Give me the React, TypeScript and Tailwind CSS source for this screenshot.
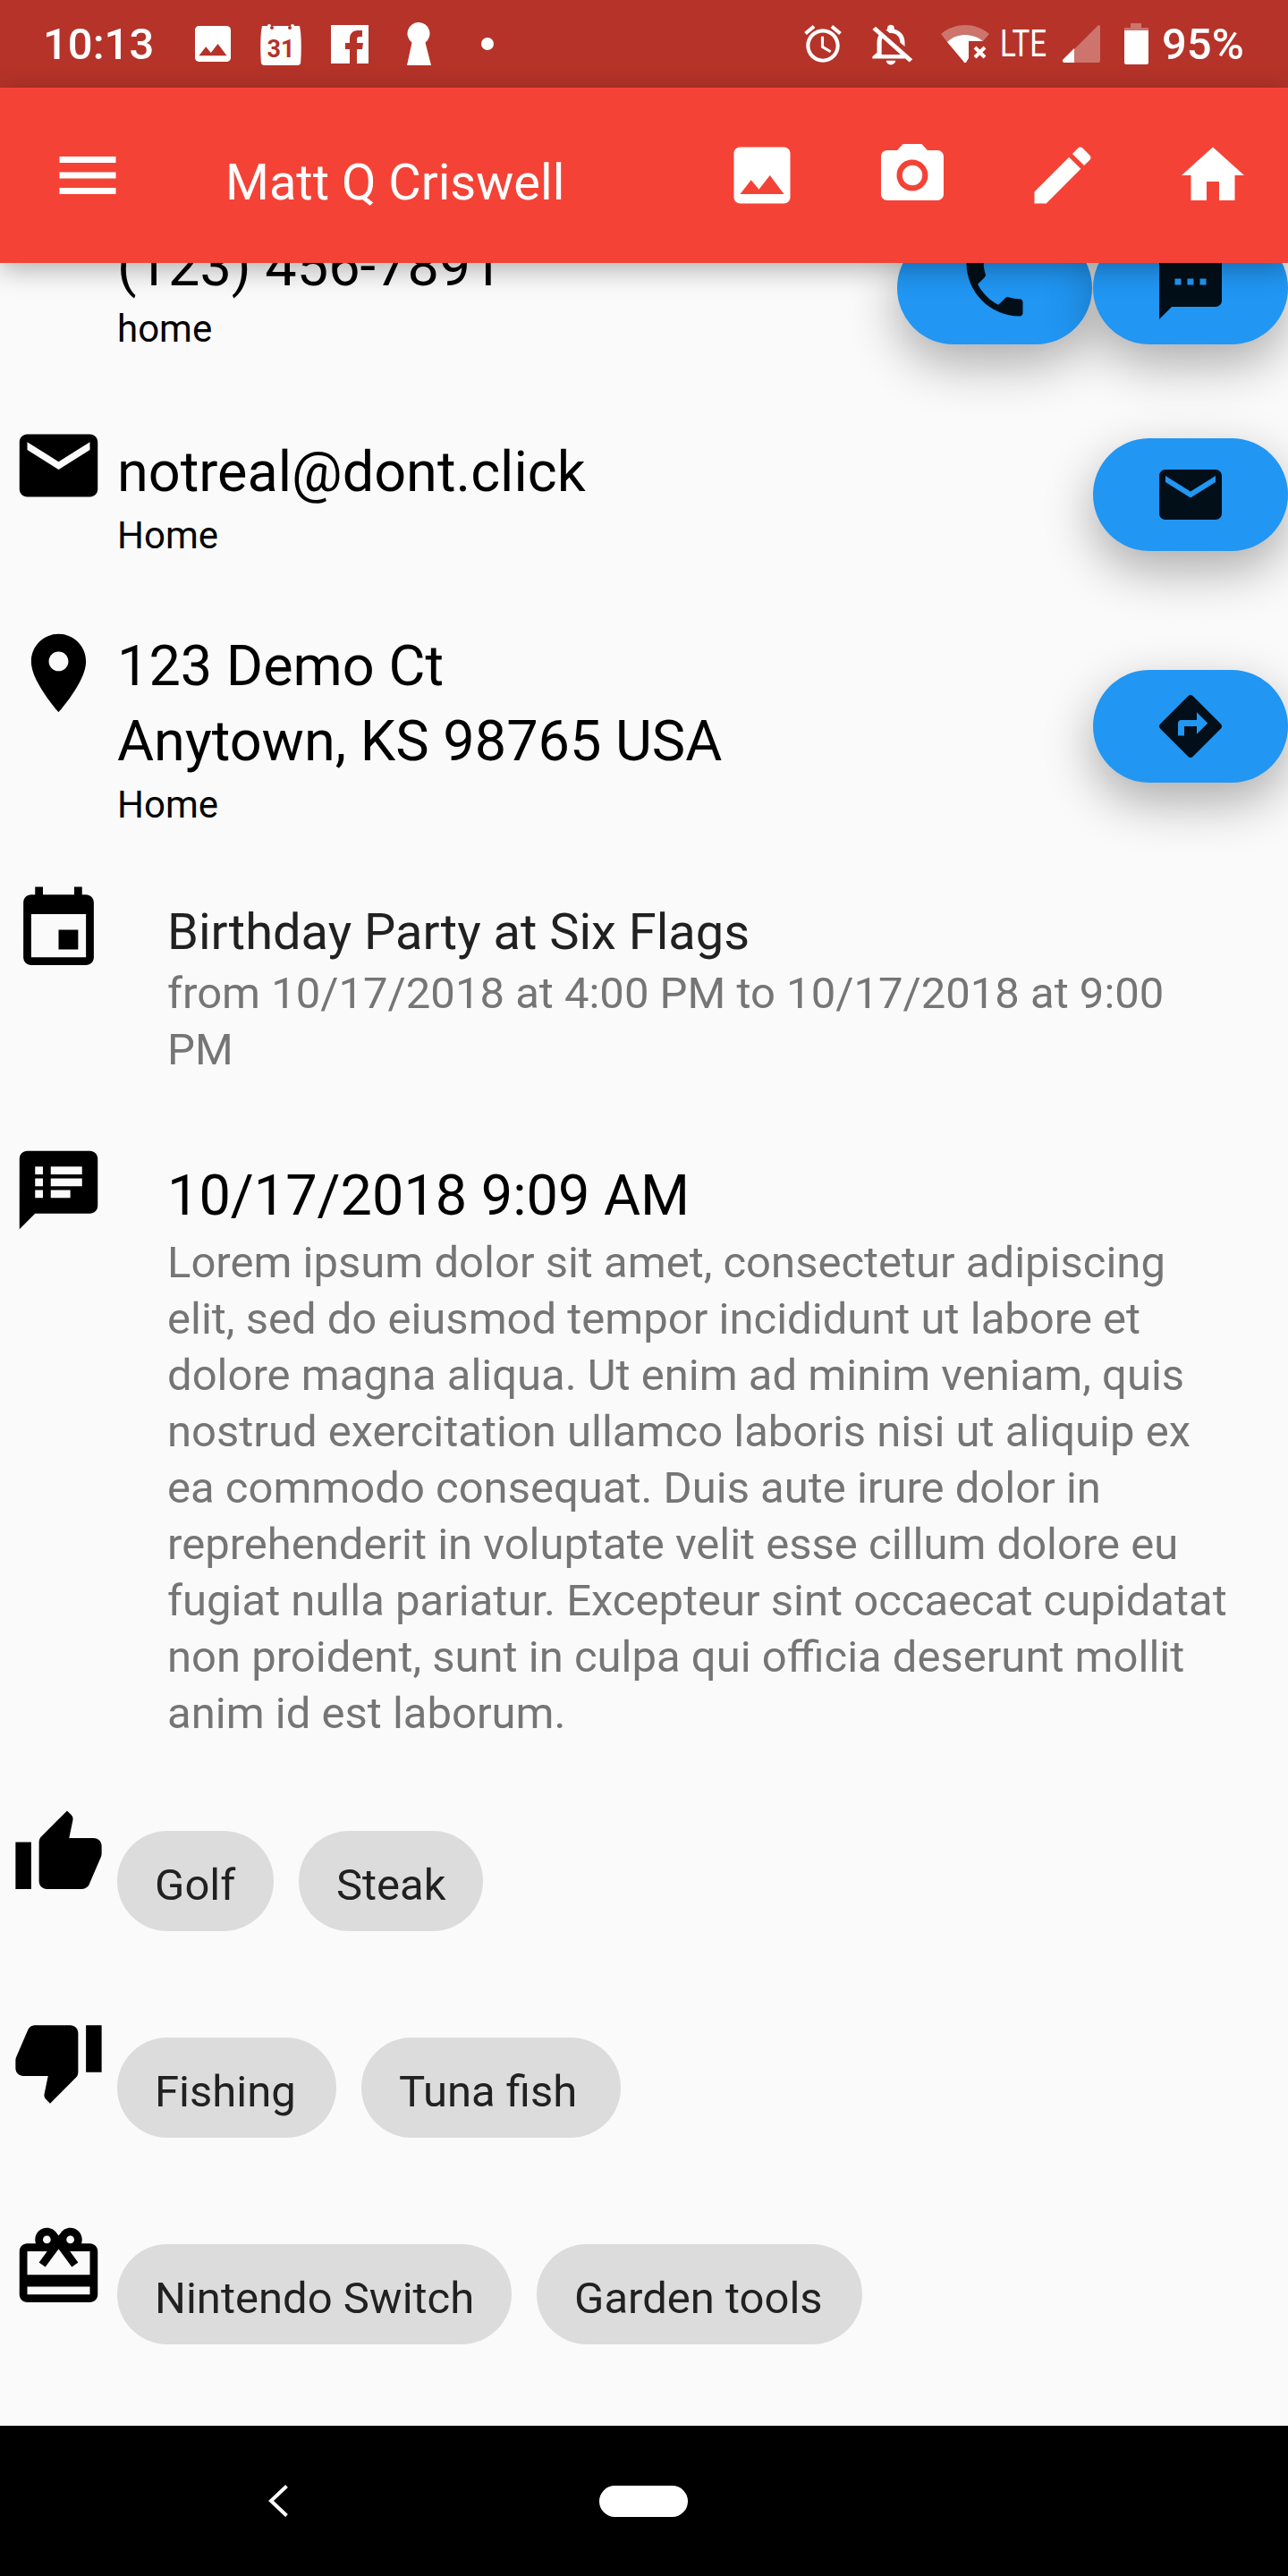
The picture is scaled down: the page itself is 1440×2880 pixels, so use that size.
const Icon = ({ d, className }: { d: string; className: string }) => (
  <svg viewBox="0 0 24 24" className={className} fill="currentColor">
    <path d={d} />
  </svg>
);

const icons = {
  menu: "M3 18h18v-2H3v2zm0-5h18v-2H3v2zm0-5h18V6H3v2z",
  photo: "M21 19V5c0-1.1-.9-2-2-2H5c-1.1 0-2 .9-2 2v14c0 1.1.9 2 2 2h14c1.1 0 2-.9 2-2zM8.5 13.5l2.5 3.01L14.5 12l4.5 6H5l3.5-4.5z",
  camera: "M12 8.8a3.2 3.2 0 1 0 0 6.4 3.2 3.2 0 0 0 0-6.4zM9 2L7.17 4H4c-1.1 0-2 .9-2 2v12c0 1.1.9 2 2 2h16c1.1 0 2-.9 2-2V6c0-1.1-.9-2-2-2h-3.17L15 2H9zm3 15c-2.76 0-5-2.24-5-5s2.24-5 5-5 5 2.24 5 5-2.24 5-5 5z",
  edit: "M3 17.25V21h3.75L17.81 9.94l-3.75-3.75L3 17.25zM20.71 7.04c.39-.39.39-1.02 0-1.41l-2.34-2.34c-.39-.39-1.02-.39-1.41 0l-1.83 1.83 3.75 3.75 1.83-1.83z",
  home: "M10 20v-6h4v6h5v-8h3L12 3 2 12h3v8z",
  mail: "M20 4H4c-1.1 0-1.99.9-1.99 2L2 18c0 1.1.9 2 2 2h16c1.1 0 2-.9 2-2V6c0-1.1-.9-2-2-2zm0 4l-8 5-8-5V6l8 5 8-5v2z",
  place: "M12 2C8.13 2 5 5.13 5 9c0 5.25 7 13 7 13s7-7.75 7-13c0-3.87-3.13-7-7-7zm0 9.5c-1.38 0-2.5-1.12-2.5-2.5s1.12-2.5 2.5-2.5 2.5 1.12 2.5 2.5-1.12 2.5-2.5 2.5z",
  phone: "M6.62 10.79c1.44 2.83 3.76 5.14 6.59 6.59l2.2-2.2c.27-.27.67-.36 1.02-.24 1.12.37 2.33.57 3.57.57.55 0 1 .45 1 1V20c0 .55-.45 1-1 1-9.39 0-17-7.61-17-17 0-.55.45-1 1-1h3.5c.55 0 1 .45 1 1 0 1.25.2 2.45.57 3.57.11.35.03.74-.25 1.02l-2.2 2.2z",
  sms: "M20 2H4c-1.1 0-1.99.9-1.99 2L2 22l4-4h14c1.1 0 2-.9 2-2V4c0-1.1-.9-2-2-2zM9 11H7V9h2v2zm4 0h-2V9h2v2zm4 0h-2V9h2v2z",
  directions: "M21.71 11.29l-9-9c-.39-.39-1.02-.39-1.41 0l-9 9c-.39.39-.39 1.02 0 1.41l9 9c.39.39 1.02.39 1.41 0l9-9c.39-.38.39-1.01 0-1.41zM14 14.5V12h-4v3H8v-4c0-.55.45-1 1-1h5V7.5l3.5 3.5-3.5 3.5z",
  event: "M17 12h-5v5h5v-5zM16 1v2H8V1H6v2H5c-1.11 0-1.99.9-1.99 2L3 19c0 1.1.89 2 2 2h14c1.1 0 2-.9 2-2V5c0-1.1-.9-2-2-2h-1V1h-2zm3 18H5V8h14v11z",
  notes: "M20 2H4c-1.1 0-1.99.9-1.99 2L2 22l4-4h14c1.1 0 2-.9 2-2V4c0-1.1-.9-2-2-2zM8 14H6v-2h2v2zm0-3H6V9h2v2zm0-3H6V6h2v2zm7 6h-5v-2h5v2zm3-3h-8V9h8v2zm0-3h-8V6h8v2z",
  thumbUp: "M1 21h4V9H1v12zm22-11c0-1.1-.9-2-2-2h-6.31l.95-4.57.03-.32c0-.41-.17-.79-.44-1.06L14.17 1 7.59 7.59C7.22 7.95 7 8.45 7 9v10c0 1.1.9 2 2 2h9c.83 0 1.54-.5 1.84-1.22l3.02-7.05c.09-.23.14-.47.14-.73v-1.91l-.01-.01L23 10z",
  thumbDown: "M15 3H6c-.83 0-1.54.5-1.84 1.22l-3.02 7.05c-.09.23-.14.47-.14.73v1.91l.01.01L1 14c0 1.1.9 2 2 2h6.31l-.95 4.57-.03.32c0 .41.17.79.44 1.06L9.83 23l6.59-6.59c.36-.36.58-.86.58-1.41V5c0-1.1-.9-2-2-2zm4 0v12h4V3h-4z",
  gift: "M20 6h-2.18c.11-.31.18-.65.18-1 0-1.66-1.34-3-3-3-1.05 0-1.96.54-2.5 1.35l-.5.67-.5-.68C10.96 2.54 10.05 2 9 2 7.34 2 6 3.34 6 5c0 .35.07.69.18 1H4c-1.11 0-1.99.89-1.99 2L2 19c0 1.11.89 2 2 2h16c1.11 0 2-.89 2-2V8c0-1.11-.89-2-2-2zm-5-2c.55 0 1 .45 1 1s-.45 1-1 1-1-.45-1-1 .45-1 1-1zM9 4c.55 0 1 .45 1 1s-.45 1-1 1-1-.45-1-1 .45-1 1-1zm11 15H4v-2h16v2zm0-5H4V8h5.08L7 10.83 8.62 12 11 8.76l1-1.36 1 1.36L15.38 12 17 10.83 14.92 8H20v6z",
  alarm: "M22 5.72l-4.6-3.86-1.29 1.53 4.6 3.86L22 5.72zM7.88 3.39L6.6 1.86 2 5.71l1.29 1.53 4.59-3.85zM12.5 8H11v6l4.75 2.85.75-1.23-4-2.37V8zM12 4c-4.97 0-9 4.03-9 9s4.02 9 9 9c4.97 0 9-4.03 9-9s-4.03-9-9-9zm0 16c-3.87 0-7-3.13-7-7s3.13-7 7-7 7 3.13 7 7-3.13 7-7 7z",
  bellOff: "M12 22c1.1 0 2-.9 2-2h-4c0 1.1.9 2 2 2zm0-15.5c2.49 0 4 2.02 4 4.5v.1l2 2V11c0-3.07-1.63-5.64-4.5-6.32V4c0-.83-.67-1.5-1.5-1.5s-1.5.67-1.5 1.5v.68c-.24.06-.47.15-.69.23l1.64 1.64c.18-.02.36-.05.55-.05zM5.41 3.35L4 4.76l2.81 2.81C6.29 8.57 6 9.74 6 11v5l-2 2v1h14.24l1.74 1.74 1.41-1.41L5.41 3.35zM16 17H8v-6c0-.68.12-1.32.34-1.9L16 16.76V17z",
};

const StatusBar = () => (
  <div className="flex h-[98px] shrink-0 items-center bg-[#b53329] pl-[48px] text-white">
    <span className="w-[124px] text-[49px] font-medium leading-none">10:13</span>
    <svg viewBox="3 3 18 18" className="ml-[46px] h-[40px] w-[40px]" fill="currentColor">
      <path d={icons.photo} />
    </svg>
    <svg viewBox="0 0 48 48" className="ml-[32px] h-[48px] w-[48px]">
      <path d="M3 4h6a2 2 0 0 1 4 0h22a2 2 0 0 1 4 0h6l1 6c1 10 1 24 0 36l-2 2H4l-2-2C1 34 1 20 2 10z" fill="#fff" />
      <circle cx="14" cy="6" r="2" fill="#b53329" />
      <circle cx="34" cy="6" r="2" fill="#b53329" />
      <text x="24" y="39" textAnchor="middle" fontSize="27" fontWeight="700" fill="#b53329">31</text>
    </svg>
    <svg viewBox="0 0 42 43" className="ml-[32px] h-[43px] w-[42px]">
      <rect width="42" height="43" fill="#fff" />
      <path d="M35 6h-5c-6 0-9 4-9 9v5h-5v7h5v16h8V27h6l1-7h-7v-4c0-2 1-3 3-3h3z" fill="#b53329" />
    </svg>
    <svg viewBox="0 0 27 48" className="ml-[43px] h-[48px] w-[27px]" fill="currentColor">
      <path d="M13.5 0a12.5 12.5 0 0 1 7 22.5L27 48H0l5.500-25.500A12.500 12.500 0 0 1 13.500 0z" />
    </svg>
    <span className="ml-[56px] h-[14px] w-[14px] rounded-full bg-white" />

    <Icon d={icons.alarm} className="ml-[343px] h-[50px] w-[50px]" />
    <svg viewBox="0 0 24 24" preserveAspectRatio="none" className="ml-[20px] h-[55px] w-[62px]" fill="currentColor">
      <path d={icons.bellOff} />
    </svg>
    <svg viewBox="0 0 54 42" className="ml-[25px] h-[42px] w-[54px]" fill="currentColor">
      <path d="M0 10C8 3 18 0 27 0s19 3 27 10l-7 8c-6-5-13-7-20-7S13 13 7 19z" fillOpacity="0.32" />
      <path d="M7 19c6-6 13-8 20-8s14 2 20 7l-16 0v19l-2.500 4a1.500 1.500 0 0 1-3 0z" />
      <path d="M38 25l11 11M49 25L38 36" stroke="#fff" strokeWidth="4" />
    </svg>
    <span className="ml-[12px] w-[58px] origin-left scale-x-[0.79] text-[42px] leading-none">LTE</span>
    <svg viewBox="0 0 42 42" className="ml-[12px] h-[42px] w-[42px]" fill="currentColor">
      <path d="M13 27L40 0a2 2 0 0 1 2 2v38a2 2 0 0 1-2 2H13z" fillOpacity="0.32" />
      <path d="M0 39L13 26v16H2c-2 0-2-2-2-3z" />
    </svg>
    <svg viewBox="0 0 27 46" className="ml-[27px] h-[46px] w-[27px]" fill="currentColor">
      <path d="M7 0h12v5h8v3H0V5h7z" fillOpacity="0.32" />
      <path d="M0 8h27v36a2 2 0 0 1-2 2H2a2 2 0 0 1-2-2z" />
    </svg>
    <span className="ml-[15px] text-[49px] font-medium leading-none">95%</span>
  </div>
);

const AppBar = () => (
  <div className="relative z-10 flex h-[196px] shrink-0 items-center bg-[#f44336] text-white shadow-[0_7px_28px_rgba(0,0,0,0.3)]">
    <div className="flex w-[252px] justify-start pl-[56px]">
      <Icon d={icons.menu} className="h-[84px] w-[84px]" />
    </div>
    <h1 className="pt-[16px] text-[56px] font-normal leading-none">Matt Q Criswell</h1>
    <div className="ml-auto flex">
      {[icons.photo, icons.camera, icons.edit, icons.home].map((d) => (
        <div key={d} className="flex w-[168px] justify-center">
          <Icon d={d} className="h-[84px] w-[84px]" />
        </div>
      ))}
    </div>
  </div>
);

const Fab = ({ d }: { d: string }) => (
  <div className="flex h-[126px] w-[218px] items-center justify-center rounded-full bg-[#2196f3] text-black/90 shadow-[0_21px_56px_rgba(0,0,0,0.32)]">
    <Icon d={d} className="h-[84px] w-[84px]" />
  </div>
);

const RowIcon = ({ d }: { d: string }) => (
  <div className="w-[131px] shrink-0 pl-[13px]">
    <Icon d={d} className="h-[105px] w-[105px] text-black" />
  </div>
);

const Chips = ({ items }: { items: { label: string; width: string }[] }) => (
  <div className="mt-[27px] flex gap-[28px]">
    {items.map((item) => (
      <span
        key={item.label}
        className={`flex h-[112px] items-center rounded-full bg-[#dcdcdc] pl-[42px] pt-[8px] text-[49px] leading-none text-[#212121] ${item.width}`}
      >
        {item.label}
      </span>
    ))}
  </div>
);

const lorem =
  "Lorem ipsum dolor sit amet, consectetur adipiscing elit, sed do eiusmod tempor incididunt ut labore et dolore magna aliqua. Ut enim ad minim veniam, quis nostrud exercitation ullamco laboris nisi ut aliquip ex ea commodo consequat. Duis aute irure dolor in reprehenderit in voluptate velit esse cillum dolore eu fugiat nulla pariatur. Excepteur sint occaecat cupidatat non proident, sunt in culpa qui officia deserunt mollit anim id est laborum.";

export default function App() {
  return (
    <div className="flex h-[2880px] w-[1440px] flex-col overflow-hidden bg-[#fafafa] [font-family:Roboto,sans-serif]">
      <StatusBar />
      <AppBar />

      <main className="min-h-0 flex-1 overflow-hidden">
        {/* phone row is scrolled partly under the app bar */}
        <div className="-mt-[38px] flex">
          <div className="w-[131px] shrink-0" />
          <div>
            <p className="text-[63px] leading-[84px] text-black">(123) 456-7891</p>
            <p className="text-[42px] leading-[55px] text-black">home</p>
          </div>
          <div className="ml-auto mt-[3px] flex gap-px">
            <Fab d={icons.phone} />
            <Fab d={icons.sms} />
          </div>
        </div>

        <div className="mt-[73px] flex">
          <RowIcon d={icons.mail} />
          <div className="mt-[18px]">
            <p className="text-[63px] leading-[84px] text-black">notreal@dont.click</p>
            <p className="text-[42px] leading-[58px] text-black">Home</p>
          </div>
          <div className="ml-auto mt-[22px]">
            <Fab d={icons.mail} />
          </div>
        </div>

        <div className="mt-[72px] flex">
          <RowIcon d={icons.place} />
          <div className="mt-[3px]">
            <p className="text-[63px] leading-[84px] text-black">123 Demo Ct</p>
            <p className="text-[63px] leading-[83px] text-black">Anytown, KS 98765 USA</p>
            <p className="text-[42px] leading-[59px] text-black">Home</p>
          </div>
          <div className="ml-auto mt-[49px]">
            <Fab d={icons.directions} />
          </div>
        </div>

        <div className="mt-[58px] flex">
          <RowIcon d={icons.event} />
          <div className="mt-[19px] w-[1197px] pl-[56px]">
            <p className="text-[56px] leading-[73px] text-[#212121]">Birthday Party at Six Flags</p>
            <p className="text-[49px] leading-[63px] text-[#757575]">from 10/17/2018 at 4:00 PM to 10/17/2018 at 9:00 PM</p>
          </div>
        </div>

        <div className="mt-[73px] flex">
          <RowIcon d={icons.notes} />
          <div className="mt-[16px] w-[1253px] pl-[56px]">
            <p className="text-[63px] leading-[86px] text-black">10/17/2018 9:09 AM</p>
            <p className="text-[49px] leading-[63px] text-[#757575]">{lorem}</p>
          </div>
        </div>

        <div className="mt-[73px] flex">
          <RowIcon d={icons.thumbUp} />
          <Chips
            items={[
              { label: "Golf", width: "w-[175px]" },
              { label: "Steak", width: "w-[206px]" },
            ]}
          />
        </div>
        <div className="mt-[92px] flex">
          <RowIcon d={icons.thumbDown} />
          <Chips
            items={[
              { label: "Fishing", width: "w-[245px]" },
              { label: "Tuna fish", width: "w-[290px]" },
            ]}
          />
        </div>
        <div className="mt-[92px] flex">
          <RowIcon d={icons.gift} />
          <Chips
            items={[
              { label: "Nintendo Switch", width: "w-[441px]" },
              { label: "Garden tools", width: "w-[364px]" },
            ]}
          />
        </div>
      </main>

      <div className="flex h-[168px] shrink-0 items-center bg-black pl-[300px]">
        <svg viewBox="0 0 22 36" className="h-[36px] w-[22px]" fill="none" stroke="#fff" strokeWidth="4">
          <path d="M20.500 1.500L3 18l17.500 16.500" />
        </svg>
        <span className="ml-[348px] h-[35px] w-[99px] rounded-full bg-white" />
      </div>
    </div>
  );
}
